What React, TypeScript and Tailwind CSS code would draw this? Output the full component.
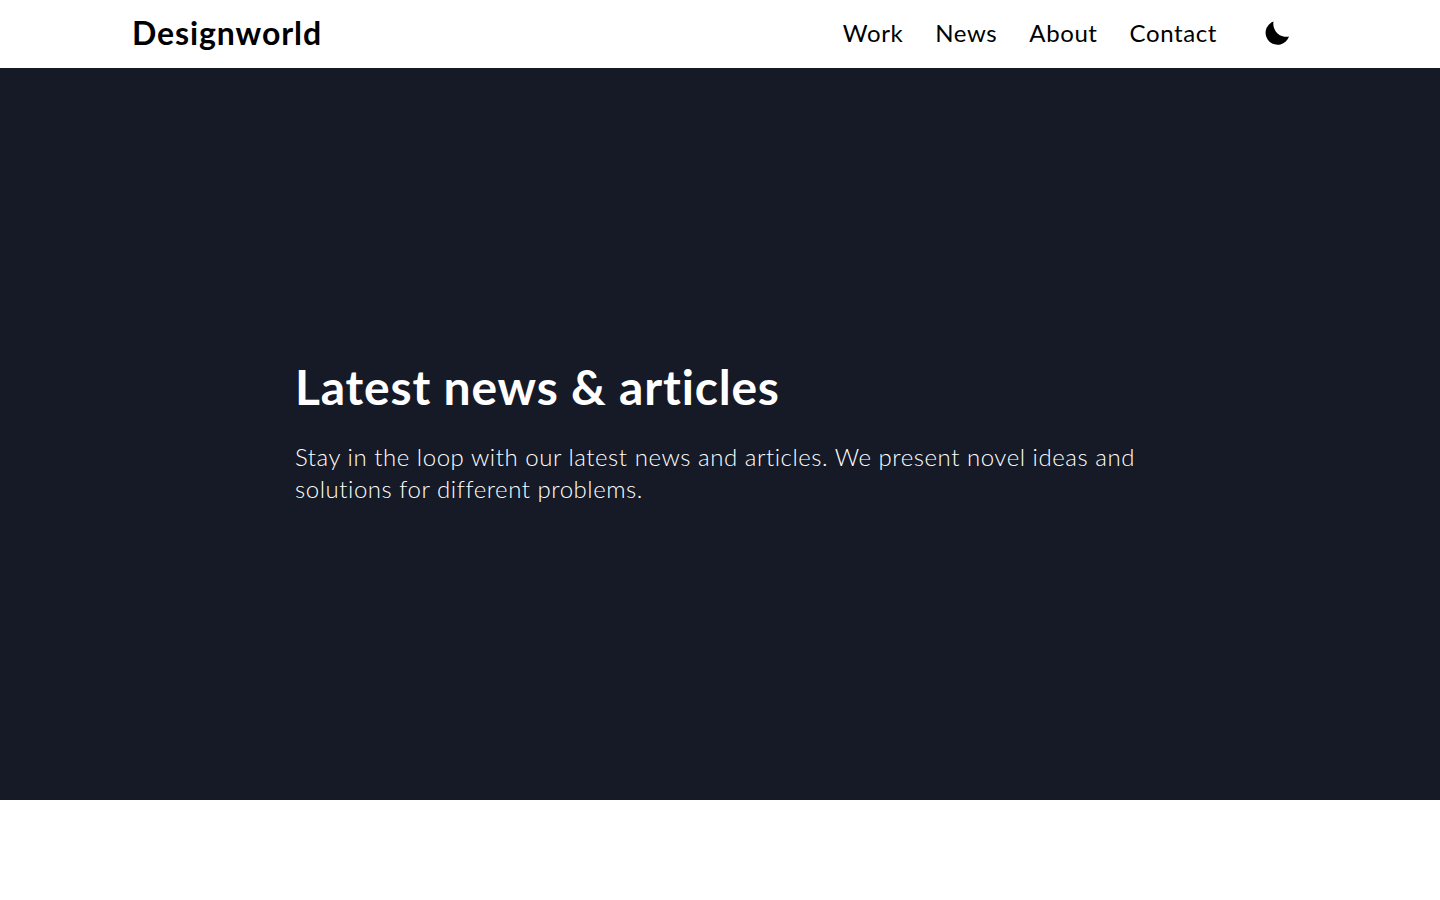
const links = ["Work", "News", "About", "Contact"];

export default function App() {
  return (
    <div className="min-h-[900px] bg-white font-['Lato',sans-serif]">
      <header className="h-[68px] pl-[132px] pr-[151px] pb-[2px] flex items-center justify-between text-black">
        <a className="text-[32px] font-bold leading-none tracking-[0.9px]">Designworld</a>
        <nav className="flex items-center">
          <ul className="flex items-center gap-8 tracking-[0.6px]">
            {links.map((link) => (
              <li key={link} className="text-2xl leading-8">
                {link}
              </li>
            ))}
          </ul>
          <button className="ml-12 w-6 h-6 flex items-center justify-center">
            <svg viewBox="0 0 24 24" className="w-6 h-6" fill="black">
              <path d="M8.5 .5A12 12 0 1 0 24 15.5A13 13 0 0 1 8.5 .5z" />
            </svg>
          </button>
        </nav>
      </header>
      <section className="h-[732px] bg-[#151a26] flex flex-col justify-center pl-[295px] pb-[6px]">
        <h1 className="text-5xl leading-[60px] font-bold text-white tracking-[0.82px]">Latest news &amp; articles</h1>
        <p className="mt-6 w-[860px] text-2xl leading-8 font-light text-white tracking-[0.54px]">
          Stay in the loop with our latest news and articles. We present novel ideas and solutions
          for different problems.
        </p>
      </section>
    </div>
  );
}
